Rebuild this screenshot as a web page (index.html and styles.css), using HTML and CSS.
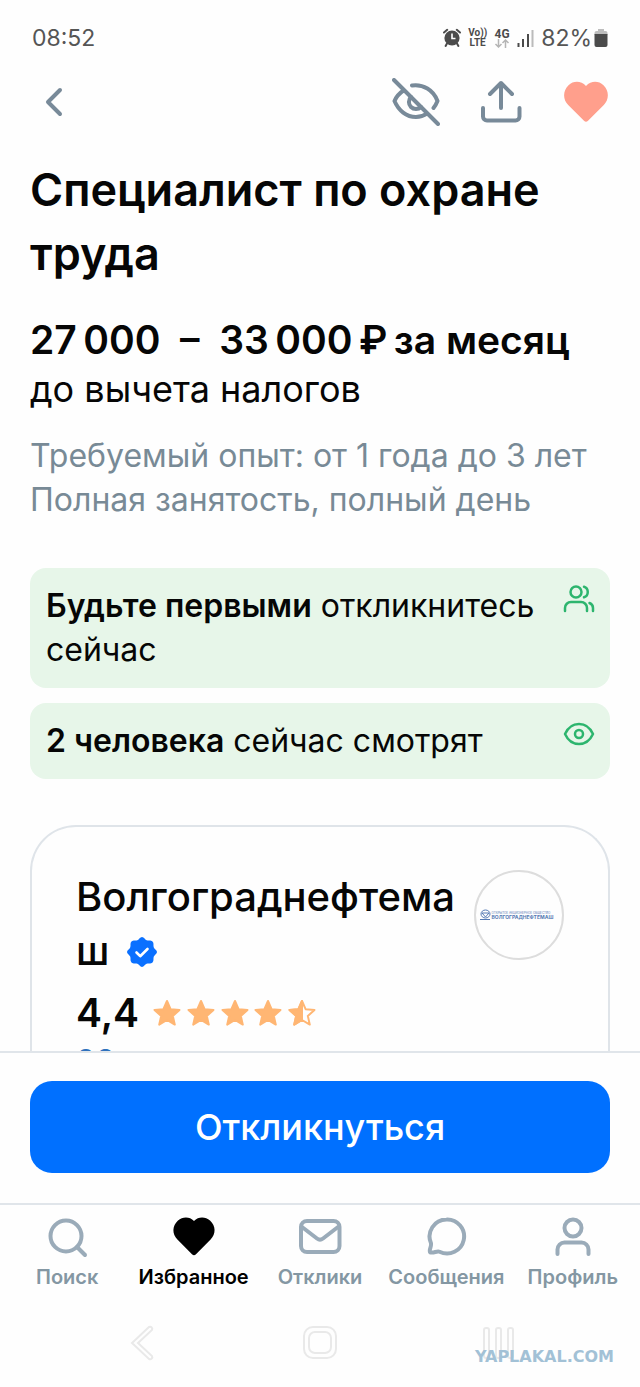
FILE: index.html
```html
<!DOCTYPE html>
<html lang="ru">
<head>
<meta charset="utf-8">
<meta name="viewport" content="width=device-width, initial-scale=1">
<title>Специалист по охране труда</title>
<link rel="stylesheet" href="styles.css">
</head>
<body>
<div class="app">
  <div class="status">
    <span class="clock">08:52</span>
    <div class="status-icons">
      <svg width="18" height="20" viewBox="0 0 18 20" fill="none">
        <circle cx="9" cy="10" r="7.6" fill="#4b4b4b"/>
        <path d="M4 15.500 2.600 18M14 15.500l1.400 2.500" stroke="#4b4b4b" stroke-width="2" stroke-linecap="round"/>
        <path d="M1 4.500 4.200 1.800M17 4.500 13.800 1.800" stroke="#4b4b4b" stroke-width="2" stroke-linecap="round"/>
        <path d="M9 5.500V10.500H12.500" stroke="#fff" stroke-width="1.600"/>
      </svg>
      <div class="net"><span>Vo))</span><span>LTE</span></div>
      <div class="net net-4g"><span>4G</span>
        <svg width="16" height="9" viewBox="0 0 16 9" fill="none" stroke="#b5b5b5" stroke-width="1.500"><path d="M4.500 0v8M1.500 5l3 3 3-3M11.500 9V1M8.500 4l3-3 3 3"/></svg>
      </div>
      <svg width="17" height="18" viewBox="0 0 17 18" stroke-width="2"><path d="M1.500 18v-4M6 18v-8M11 18V5" stroke="#4b4b4b"/><path d="M15.500 18V1" stroke="#bbb"/></svg>
      <div class="battery"><span>82%</span>
        <svg width="14" height="18" viewBox="0 0 14 18"><path d="M4 0h6v2h1.500A2 2 0 0 1 13.500 4v2H.5V4a2 2 0 0 1 2-2H4z" fill="#bdbdbd"/><path d="M.5 5h13v11a2 2 0 0 1-2 2h-9a2 2 0 0 1-2-2z" fill="#4b4b4b"/></svg>
      </div>
    </div>
  </div>

  <header class="toolbar">
    <button class="icon-btn" aria-label="Назад">
      <svg width="48" height="48" viewBox="0 0 48 48" fill="none" stroke="#788a99" stroke-width="4" stroke-linecap="round" stroke-linejoin="round"><path d="M30 12 18 24l12 12"/></svg>
    </button>
    <div class="actions">
      <button class="icon-btn" aria-label="Скрыть">
        <svg width="48" height="48" viewBox="0 0 48 48" fill="none" stroke="#788a99" stroke-width="4" stroke-linecap="round" stroke-linejoin="round"><path d="M2 2 46 46M11.500 12.500C7 15.500 4 19.500 2.500 23c4 9.500 12 16 21.500 16 4.200 0 8-1.300 11-3.300M20 7.500c11-1.600 21.500 4.500 25.500 15.500-.9 2.300-2.200 4.700-4 7"/><path d="M19 19a6.800 6.800 0 0 0 10 10"/></svg>
      </button>
      <button class="icon-btn" aria-label="Поделиться">
        <svg width="48" height="48" viewBox="0 0 48 48" fill="none" stroke="#788a99" stroke-width="4" stroke-linecap="round" stroke-linejoin="round"><path d="M24 30V5M13 16 24 5l11 11M6 30v8.500a4 4 0 0 0 4 4h28.500a4 4 0 0 0 4-4V30"/></svg>
      </button>
      <button class="icon-btn" aria-label="В избранном">
        <svg width="48" height="48" viewBox="0 0 48 48"><path d="M24 8C19 2.500 11.500 2.500 6.500 7.200c-5.800 5.600-5.800 14.200-.3 19.800L22 42.700a2.800 2.800 0 0 0 4 0L41.800 27c5.500-5.600 5.500-14.200-.3-19.800C36.500 2.500 29 2.500 24 8z" fill="#ff9f8c"/></svg>
      </button>
    </div>
  </header>

  <main class="content">
    <h1 class="title">Специалист по охране труда</h1>
    <p class="salary">27&#8201;000 &nbsp;–&nbsp; 33&#8201;000&#8201;₽&#8201;за месяц</p>
    <p class="tax">до вычета налогов</p>
    <div class="terms">
      <p>Требуемый опыт: от 1 года до 3 лет</p>
      <p>Полная занятость, полный день</p>
    </div>
    <div class="notes">
      <div class="note">
        <p><b>Будьте первыми</b> откликнитесь сейчас</p>
        <svg width="32" height="32" viewBox="0 0 32 32" fill="none" stroke="#2db56e" stroke-width="2.500" stroke-linecap="round" stroke-linejoin="round"><circle cx="13" cy="8" r="5.500"/><path d="M21 2.700c5 1.500 5 9 0 10.600M2 27v-3a6 6 0 0 1 6-6h10a6 6 0 0 1 6 6v3M26.500 19c2.500 1 3.500 3 3.500 5v3"/></svg>
      </div>
      <div class="note">
        <p><b>2 человека</b> сейчас смотрят</p>
        <svg width="32" height="32" viewBox="0 0 32 32" fill="none" stroke="#2db56e" stroke-width="2.500"><path d="M2 15C5 8.500 10 5 16 5s11 3.500 14 10c-3 6.500-8 10-14 10S5 21.500 2 15z" stroke-linejoin="round"/><circle cx="16" cy="15" r="4"/></svg>
      </div>
    </div>
    <section class="company">
      <div class="company-info">
        <h2 class="company-name">Волгограднефтемаш
          <svg class="verified" width="32" height="32" viewBox="0 0 32 32"><path d="M16 1c2 0 2.800 2.500 4.600 3.200C22.500 5 24.800 3.800 26.500 5.500s.5 4 1.300 5.900C28.500 13.200 31 14 31 16s-2.500 2.800-3.200 4.600c-.8 1.900.4 4.200-1.300 5.900s-4 .5-5.900 1.300C18.800 28.500 18 31 16 31s-2.800-2.500-4.600-3.200c-1.900-.8-4.200.4-5.900-1.300s-.5-4-1.300-5.900C3.500 18.800 1 18 1 16s2.500-2.800 3.200-4.600C5 9.500 3.800 7.200 5.500 5.500s4-.5 5.900-1.300C13.200 3.500 14 1 16 1z" fill="#0a70ff"/><path d="m10.500 16.500 3.700 3.700 7.300-7.200" fill="none" stroke="#fff" stroke-width="2.600" stroke-linecap="round" stroke-linejoin="round"/></svg>
        </h2>
        <div class="rating"><span>4,4</span>
          <svg width="164" height="30" viewBox="0 0 164 30" fill="#ffb673" stroke="#ffb673" stroke-width="2" stroke-linejoin="round" role="img" aria-label="4,4 из 5">
            <defs><path id="star" d="m14 3 3.600 8.200 8.900.8-6.700 5.900 2 8.700-7.800-4.600-7.800 4.600 2-8.700L1.500 12l8.900-.8z"/></defs>
            <use href="#star"/><use href="#star" x="34"/><use href="#star" x="68"/><use href="#star" x="101"/>
            <use href="#star" x="135" fill="none"/><path d="m149 3-3.600 8.200-8.900.8 6.700 5.900-2 8.700 7.800-4.600z"/>
          </svg>
        </div>
        <a class="reviews" href="#reviews">28</a>
      </div>
      <div class="logo">
        <svg width="78" height="12" viewBox="0 0 78 12"><g fill="none" stroke="#5579b3"><ellipse cx="5.500" cy="5" rx="4.500" ry="4"/><path d="M2 4h7L5.500 8zM0 10.500h10"/></g><text class="logo-small" x="11.500" y="4.500">ОТКРЫТОЕ АКЦИОНЕРНОЕ ОБЩЕСТВО</text><text class="logo-big" x="11.500" y="10">ВОЛГОГРАДНЕФТЕМАШ</text></svg>
      </div>
    </section>
  </main>

  <div class="cta"><button class="apply">Откликнуться</button></div>

  <nav class="tabs">
    <a class="tab" href="#search"><svg width="44" height="44" viewBox="0 0 44 44"><circle cx="21" cy="20" r="15.500"/><path d="m32 31 8 8"/></svg>Поиск</a>
    <a class="tab tab-active" href="#fav"><svg width="44" height="44" viewBox="0 0 44 44"><path class="solid" d="M22 5C17.500.3 10.500.5 6 4.600c-6 5.400-6 13.500-.6 19L20 38.200a2.800 2.800 0 0 0 4 0L38.600 23.600c5.400-5.500 5.400-13.600-.6-19C33.500.5 26.500.3 22 5z"/></svg>Избранное</a>
    <a class="tab" href="#replies"><svg width="44" height="44" viewBox="0 0 44 44"><rect x="3" y="5" width="38.500" height="31" rx="6"/><path d="m4 11 15 11.500a5 5 0 0 0 6 0L40 11"/></svg>Отклики</a>
    <a class="tab" href="#messages"><svg width="44" height="44" viewBox="0 0 44 44"><path d="M22.500 3.500a17 17 0 1 1-7 32.200c-2.500-1.200-6 1.800-9.300.6-1.800-1.400 1.500-5.800.8-9A17 17 0 0 1 22.500 3.500z"/></svg>Сообщения</a>
    <a class="tab" href="#profile"><svg width="44" height="44" viewBox="0 0 44 44"><circle cx="22" cy="12" r="8.500"/><path d="M6.500 38v-4.500a7 7 0 0 1 7-7h17a7 7 0 0 1 7 7V38"/></svg>Профиль</a>
  </nav>

  <footer class="system">
    <button class="sys-btn" aria-label="Назад"><svg width="36" height="36" viewBox="0 0 36 36"><path d="M25 2 8 18l17 16c2 1 4-1 3-3L14 18 28 5c1-2-1-4-3-3z"/></svg></button>
    <button class="sys-btn" aria-label="Домой"><svg width="36" height="36" viewBox="0 0 36 36"><rect x="2" y="2" width="32" height="31" rx="9"/><rect x="7" y="7" width="22" height="21" rx="6"/></svg></button>
    <button class="sys-btn" aria-label="Недавние"><svg width="36" height="36" viewBox="0 0 36 36"><rect x="4" y="3" width="5" height="30" rx="2"/><rect x="16" y="3" width="5" height="30" rx="2"/><rect x="28" y="3" width="5" height="30" rx="2"/></svg></button>
    <span class="watermark">YAPLAKAL.COM</span>
  </footer>
</div>
</body>
</html>
```
FILE: styles.css
```css
* { box-sizing: border-box; margin: 0; }
body { font-family: Inter, "Liberation Sans", sans-serif; background: #fefefe; color: #060606; }
svg { flex: none; }
button { border: 0; padding: 0; background: none; font: inherit; }
a { text-decoration: none; color: inherit; }
.app { display: flex; flex-direction: column; height: 100vh; overflow: hidden; }

.status { display: flex; justify-content: space-between; align-items: center; height: 76px; padding: 0 32px; font-size: 23px; color: #555; }
.status-icons { display: flex; align-items: center; gap: 7px; }
.net { display: flex; flex-direction: column; align-items: center; font: bold 10px/10px Roboto, sans-serif; color: #4b4b4b; }
.net-4g { font-size: 12px; }
.battery { display: flex; align-items: center; gap: 2px; }

.toolbar { display: flex; justify-content: space-between; padding: 2px 30px 0; }
.actions { display: flex; gap: 37px; }
.icon-btn svg { display: block; }

.content { flex: 1; min-height: 0; overflow: hidden; padding: 32px 30px 0; }
.title { font-size: 45px; font-weight: 600; line-height: 64px; }
.salary { margin-top: 30px; font-size: 39px; font-weight: 600; line-height: 48px; }
.tax { font-size: 36px; line-height: 50px; }
.terms { margin-top: 20px; font-size: 32px; line-height: 44px; color: #788a96; }
.notes { display: flex; flex-direction: column; gap: 15px; margin-top: 46px; }
.note { display: flex; justify-content: space-between; gap: 16px; padding: 16px 15px 16px 16px; border-radius: 16px; background: #e7f6e9; font-size: 32px; line-height: 44px; }
.note b { font-weight: 600; }
.company { display: flex; justify-content: space-between; gap: 16px; margin-top: 46px; padding: 43px 44px; border: 2px solid #dfe4e9; border-bottom: 0; border-radius: 46px 46px 0 0; min-height: 400px; }
.company-info { min-width: 0; }
.company-name { font-size: 40px; font-weight: 500; line-height: 54px; overflow-wrap: anywhere; }
.verified { margin-left: 6px; vertical-align: -3px; }
.rating { display: flex; align-items: center; gap: 14px; margin-top: 4px; font-size: 39px; font-weight: 600; line-height: 62px; }
.reviews { display: block; font-size: 32px; line-height: 36px; color: #2f72bd; }
.logo { display: flex; flex: none; align-items: center; justify-content: center; width: 90px; height: 90px; border: 2px solid #ddd; border-radius: 50%; }
.logo text { font-family: Inter, sans-serif; fill: #5579b3; }
.logo-small { font-size: 3px; }
.logo-big { font-size: 5px; font-weight: 700; }

.cta { padding: 28px 30px; border-top: 2px solid #e0e5ea; background: #fefefe; }
.apply { display: block; width: 100%; height: 92px; margin: 0 0 2px; border-radius: 22px; background: #0070ff; color: #fff; font-size: 36px; font-weight: 500; }

.tabs { display: grid; grid-template-columns: repeat(5, 1fr); padding: 11px 4px 0; border-top: 2px solid #e0e5ea; font-size: 20px; font-weight: 600; line-height: 34px; color: #8497a3; }
.tab { display: flex; flex-direction: column; align-items: center; }
.tab svg { fill: none; stroke: #9aabb9; stroke-width: 4; stroke-linecap: round; stroke-linejoin: round; }
.tab-active { color: #000; }
.tab .solid { fill: #000; stroke: none; }

.system { position: relative; display: flex; justify-content: space-between; padding: 31px 124px 26px; }
.sys-btn svg { display: block; fill: none; stroke: #e9e9e9; stroke-width: 2; }
.watermark { position: absolute; right: 26px; bottom: 20px; font: bold 16px/20px "DejaVu Sans", sans-serif; color: #a2c1d6; }
```
